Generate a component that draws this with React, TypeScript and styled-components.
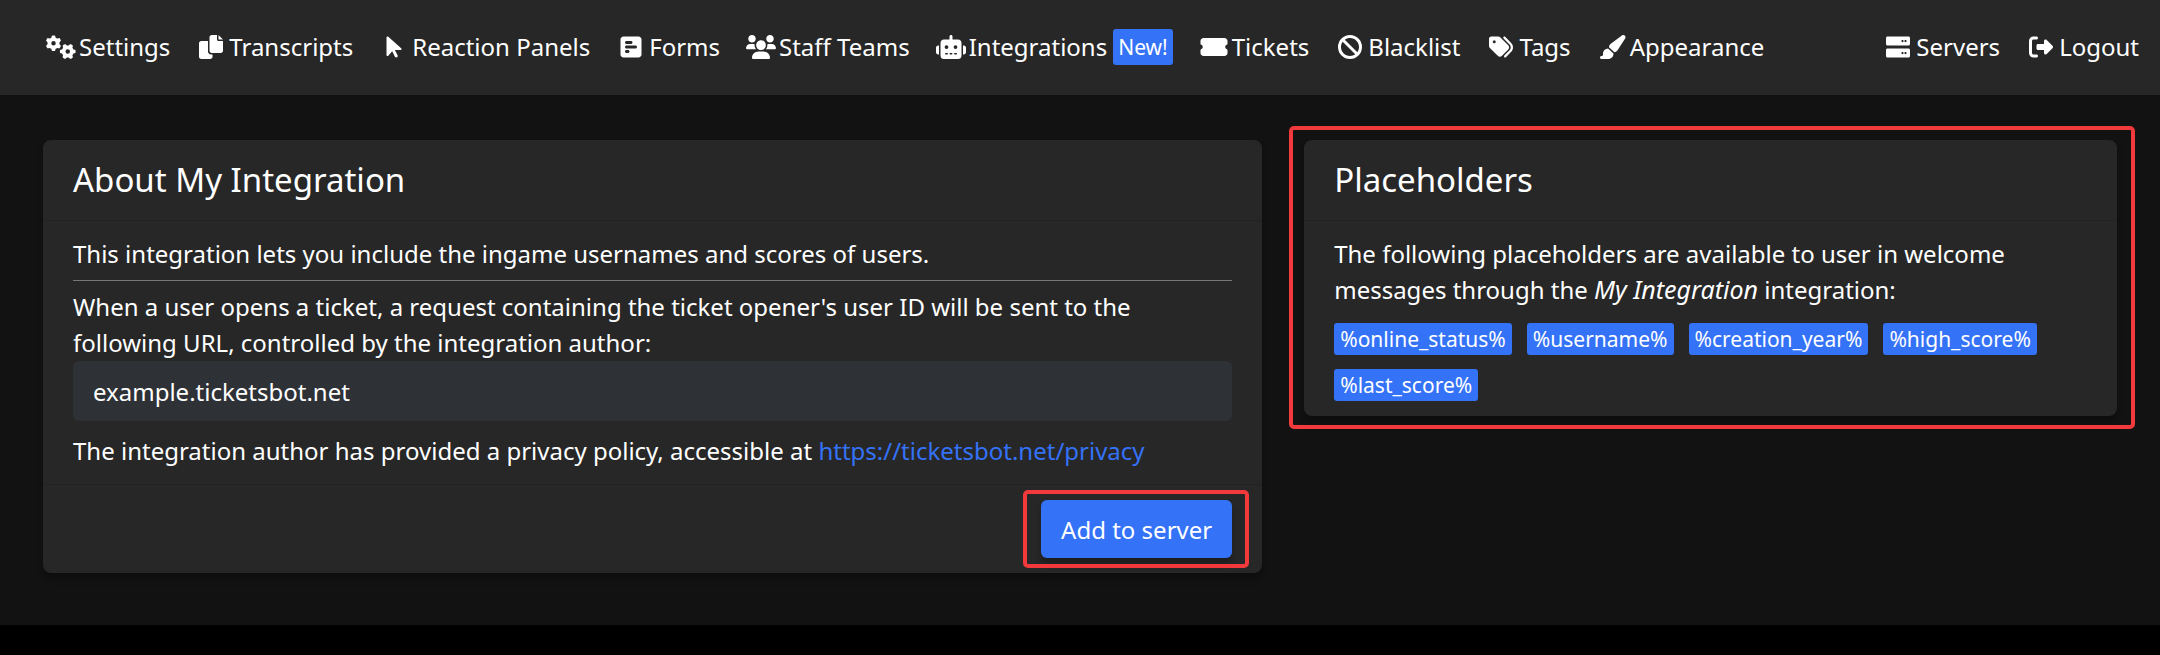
import React from "react";
import styled, { createGlobalStyle } from "styled-components";
import {
  FaArrowPointer,
  FaBan,
  FaGears,
  FaPaintbrush,
  FaRightFromBracket,
  FaRobot,
  FaSquarePollHorizontal,
  FaTags,
  FaTicketSimple,
} from "react-icons/fa6";

const blue = "#3472f7";
const panel = "#272727";

const GlobalStyle = createGlobalStyle`
  *, *::before, *::after { box-sizing: border-box; }
  body {
    margin: 0;
    background: #000;
    color: #fff;
    font-family: "Noto Sans", sans-serif;
    font-size: 24px;
    line-height: 36px;
  }
`;

const Page = styled.div`
  background: #121212;
  padding-bottom: 52px;
`;

const Nav = styled.nav`
  display: flex;
  justify-content: space-between;
  align-items: center;
  background: ${panel};
  padding: 29px 21px 30px 46px;
`;

const NavGroup = styled.div`
  display: flex;
  align-items: center;
  gap: 26px;
`;

const NavLink = styled.a`
  display: flex;
  align-items: center;
  gap: 3px;
  color: #fff;
  text-decoration: none;
  white-space: nowrap;
`;

const IconSlot = styled.span`
  flex: none;

  svg {
    display: block;
    width: 30px;
    height: 24px;
    fill: currentColor;
  }
`;

const Badge = styled.span`
  background: ${blue};
  border-radius: 3px;
  padding: 0 6px;
  font-size: 21px;
  line-height: 32px;
`;

const NewBadge = styled(Badge)`
  margin-left: 3px;
  padding: 0 5px;
  line-height: 36px;
`;

const Main = styled.main`
  display: grid;
  grid-template-columns: 3fr 2fr;
  align-items: start;
  gap: 42px;
  padding: 45px 43px 0;
`;

const Card = styled.section`
  background: ${panel};
  border-radius: 8px;
  box-shadow: 0 6px 6px rgba(0, 0, 0, 0.25);
`;

const CardHeader = styled.header`
  padding: 16px 30px;
  border-bottom: 1px solid #222;
`;

const Title = styled.h1`
  margin: 0;
  font-size: 33px;
  line-height: 48px;
  font-weight: 400;
`;

const CardBody = styled.div`
  padding: 15px 30px;
`;

const Text = styled.p`
  margin: 0;
`;

const IntegrationName = styled.em`
  font-size: 25px;
  line-height: 1;
`;

const Rule = styled.hr`
  margin: 8px 0;
  border: 0;
  border-top: 1px solid #777;
`;

const UrlInput = styled.input`
  display: block;
  width: 100%;
  height: 60px;
  margin-bottom: 12px;
  padding: 0 20px;
  border: 0;
  border-radius: 6px;
  background: #2e3136;
  color: #fff;
  font: inherit;
`;

const PolicyLink = styled.a`
  color: ${blue};
  text-decoration: none;
`;

const CardFooter = styled.footer`
  display: flex;
  justify-content: flex-end;
  padding: 15px 30px;
  border-top: 1px solid #222;
`;

const Highlight = styled.div<{ $top: number; $right: number; $bottom: number; $left: number }>`
  position: relative;

  &::after {
    content: "";
    position: absolute;
    top: -${(p) => p.$top}px;
    right: -${(p) => p.$right}px;
    bottom: -${(p) => p.$bottom}px;
    left: -${(p) => p.$left}px;
    border: 4px solid #f23a3c;
    border-radius: 5px;
    pointer-events: none;
  }
`;

const AddButton = styled.button`
  display: block;
  padding: 12px 20px 10px;
  border: 0;
  border-radius: 6px;
  background: ${blue};
  box-shadow: 0 6px 6px rgba(0, 0, 0, 0.25);
  color: #fff;
  font: inherit;
`;

const BadgeList = styled.div`
  display: flex;
  flex-wrap: wrap;
  gap: 14px 15px;
  padding-top: 15px;
`;

function CopyIcon() {
  return (
    <svg viewBox="0 0 512 512" aria-hidden>
      <path d="M384 96L384 0h-112c-26.51 0-48 21.49-48 48v288c0 26.51 21.49 48 48 48H464c26.51 0 48-21.49 48-48V128h-95.1C398.4 128 384 113.6 384 96zM416 0v96h96L416 0zM192 352V128h-144c-26.51 0-48 21.49-48 48v288c0 26.51 21.49 48 48 48h192c26.51 0 48-21.49 48-48L288 416h-32C220.7 416 192 387.3 192 352z" />
    </svg>
  );
}

function UsersIcon() {
  return (
    <svg viewBox="0 0 640 512" aria-hidden>
      <path d="M319.9 320c57.41 0 103.1-46.56 103.1-104c0-57.44-46.54-104-103.1-104c-57.41 0-103.1 46.56-103.1 104C215.9 273.4 262.5 320 319.9 320zM369.9 352H270.1C191.6 352 128 411.7 128 485.3C128 500.1 140.7 512 156.4 512h327.2C499.3 512 512 500.1 512 485.3C512 411.7 448.4 352 369.9 352zM512 160c44.18 0 80-35.82 80-80S556.2 0 512 0c-44.18 0-80 35.82-80 80S467.8 160 512 160zM183.9 216c0-5.449 .9824-10.63 1.609-15.91C174.6 194.1 162.6 192 149.9 192H88.08C39.44 192 0 233.8 0 285.3C0 295.6 7.887 304 17.62 304h199.5C196.7 280.2 183.9 249.7 183.9 216zM128 160c44.18 0 80-35.82 80-80S172.2 0 128 0C83.82 0 48 35.82 48 80S83.82 160 128 160zM551.9 192h-61.84c-12.8 0-24.88 3.037-35.86 8.24C454.8 205.5 455.8 210.6 455.8 216c0 33.71-12.78 64.21-33.16 88h199.7C632.1 304 640 295.6 640 285.3C640 233.8 600.6 192 551.9 192z" />
    </svg>
  );
}

function ServerIcon() {
  return (
    <svg viewBox="0 0 512 512" aria-hidden>
      <path d="M480 288H32c-17.62 0-32 14.38-32 32v128c0 17.62 14.38 32 32 32h448c17.62 0 32-14.38 32-32v-128C512 302.4 497.6 288 480 288zM352 408c-13.25 0-24-10.75-24-24s10.75-24 24-24s24 10.75 24 24S365.3 408 352 408zM416 408c-13.25 0-24-10.75-24-24s10.75-24 24-24s24 10.75 24 24S429.3 408 416 408zM480 32H32C14.38 32 0 46.38 0 64v128c0 17.62 14.38 32 32 32h448c17.62 0 32-14.38 32-32V64C512 46.38 497.6 32 480 32zM352 152c-13.25 0-24-10.75-24-24s10.75-24 24-24s24 10.75 24 24S365.3 152 352 152zM416 152c-13.25 0-24-10.75-24-24s10.75-24 24-24s24 10.75 24 24S429.3 152 416 152z" />
    </svg>
  );
}

type Item = { label: string; icon: React.ComponentType; badge?: string };

const leftItems: Item[] = [
  { label: "Settings", icon: FaGears },
  { label: "Transcripts", icon: CopyIcon },
  { label: "Reaction Panels", icon: FaArrowPointer },
  { label: "Forms", icon: FaSquarePollHorizontal },
  { label: "Staff Teams", icon: UsersIcon },
  { label: "Integrations", icon: FaRobot, badge: "New!" },
  { label: "Tickets", icon: FaTicketSimple },
  { label: "Blacklist", icon: FaBan },
  { label: "Tags", icon: FaTags },
  { label: "Appearance", icon: FaPaintbrush },
];

const rightItems: Item[] = [
  { label: "Servers", icon: ServerIcon },
  { label: "Logout", icon: FaRightFromBracket },
];

const placeholders = [
  "%online_status%",
  "%username%",
  "%creation_year%",
  "%high_score%",
  "%last_score%",
];

function NavItems({ items }: { items: Item[] }) {
  return (
    <NavGroup>
      {items.map(({ label, icon: Icon, badge }) => (
        <NavLink href="#" key={label}>
          <IconSlot>
            <Icon />
          </IconSlot>
          {label}
          {badge && <NewBadge>{badge}</NewBadge>}
        </NavLink>
      ))}
    </NavGroup>
  );
}

export default function App() {
  return (
    <Page>
      <GlobalStyle />
      <Nav>
        <NavItems items={leftItems} />
        <NavItems items={rightItems} />
      </Nav>
      <Main>
        <Card>
          <CardHeader>
            <Title>About My Integration</Title>
          </CardHeader>
          <CardBody>
            <Text>This integration lets you include the ingame usernames and scores of users.</Text>
            <Rule />
            <Text as="label" htmlFor="request-url">
              When a user opens a ticket, a request containing the ticket opener's user ID will be sent to the
              following URL, controlled by the integration author:
            </Text>
            <UrlInput id="request-url" readOnly value="example.ticketsbot.net" />
            <Text>
              The integration author has provided a privacy policy, accessible at{" "}
              <PolicyLink href="#">https://ticketsbot.net/privacy</PolicyLink>
            </Text>
          </CardBody>
          <CardFooter>
            <Highlight $top={10} $right={17} $bottom={10} $left={18}>
              <AddButton type="button">Add to server</AddButton>
            </Highlight>
          </CardFooter>
        </Card>
        <Highlight $top={14} $right={18} $bottom={13} $left={15}>
          <Card>
            <CardHeader>
              <Title as="h2">Placeholders</Title>
            </CardHeader>
            <CardBody>
              <Text>
                The following placeholders are available to user in welcome messages through the{" "}
                <IntegrationName>My Integration</IntegrationName> integration:
              </Text>
              <BadgeList>
                {placeholders.map((name) => (
                  <Badge key={name}>{name}</Badge>
                ))}
              </BadgeList>
            </CardBody>
          </Card>
        </Highlight>
      </Main>
    </Page>
  );
}
